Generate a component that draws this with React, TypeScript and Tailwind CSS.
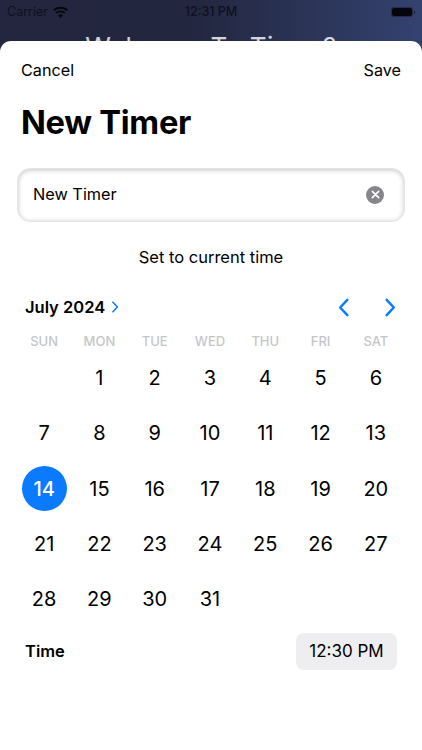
import React from "react";

const days: (number | null)[] = [null, ...Array.from({ length: 31 }, (_, i) => i + 1)];
const heads = ["SUN", "MON", "TUE", "WED", "THU", "FRI", "SAT"];

function Chevron({ dir, className }: { dir: "l" | "r"; className: string }) {
  return (
    <svg viewBox="0 0 12 20" className={className} fill="none" stroke="#0a7aff" strokeWidth="2.6" strokeLinecap="round" strokeLinejoin="round">
      <path d={dir === "r" ? "M2.5 2 L10 10 L2.5 18" : "M9.5 2 L2 10 L9.5 18"} />
    </svg>
  );
}

export default function App() {
  return (
    <div className="relative w-[422px] h-[750px] overflow-hidden bg-[linear-gradient(90deg,#23263e_0%,#22263f_45%,#34426f_100%)] font-['Inter','Liberation_Sans',sans-serif]">
      <div className="h-[23px] flex items-center justify-between pl-[7px] pr-[7px] pt-[1px]">
        <div className="flex items-center gap-[5px] w-[100px]">
          <span className="text-[12.5px] text-[#0e1020]">Carrier</span>
          <svg viewBox="0 0 18 13" className="w-[15px] h-[11px]" fill="#05060c">
            <path d="M9 13 L6.3 9.9 A4 4 0 0 1 11.7 9.9 Z" />
            <path d="M4.6 8.1 L3.1 6.4 A8.6 8.6 0 0 1 14.9 6.4 L13.4 8.1 A6.4 6.4 0 0 0 4.6 8.1 Z" />
            <path d="M1.6 4.8 L0 3.1 A13 13 0 0 1 18 3.1 L16.4 4.8 A10.8 10.8 0 0 0 1.6 4.8 Z" />
          </svg>
        </div>
        <span className="text-[12.5px] font-medium text-[#0e1020]">12:31 PM</span>
        <div className="w-[100px] flex justify-end items-center gap-[1px]">
          <div className="w-[22px] h-[10px] rounded-[3px] bg-[#05060c] border border-[#262b4a]" />
          <div className="w-[1px] h-[3px] bg-[#171a30]" />
        </div>
      </div>
      <div className="absolute top-[29px] left-0 right-0 text-center text-[26px] leading-[36px] text-white/80 font-normal tracking-[0.5px]">Welcome To Timer?</div>

      <div className="absolute top-[41px] left-0 right-0 bottom-0 bg-white rounded-t-[11px] px-[21px]">
        <div className="flex justify-between items-center h-[18px] mt-[20px] text-[16.2px] text-black">
          <span>Cancel</span>
          <span>Save</span>
        </div>
        <h1 className="mt-[23px] text-[32.7px] leading-[40px] font-bold text-black tracking-[-0.3px]">New Timer</h1>

        <div className="mt-[25.5px] -mx-[4px] h-[54px] rounded-[13px] border border-[#e4e4e6] bg-white shadow-[inset_0_1px_5px_rgba(0,0,0,0.24)] flex items-center justify-between pl-[15px] pr-[20px]">
          <span className="text-[16.3px] text-black">New Timer</span>
          <div className="w-[18px] h-[18px] rounded-full bg-[#85858b] flex items-center justify-center">
            <svg viewBox="0 0 10 10" className="w-[9px] h-[9px]" stroke="#fff" strokeWidth="1.9" strokeLinecap="round">
              <path d="M1.5 1.5 L8.5 8.5 M8.5 1.5 L1.5 8.5" />
            </svg>
          </div>
        </div>

        <div className="mt-[25.5px] text-center text-[16.5px] leading-[20px] text-black">Set to current time</div>

        <div className="mt-[30px] flex items-center justify-between pl-[4px] pr-[5px] h-[20px]">
          <div className="flex items-center gap-[6px]">
            <span className="text-[16.5px] font-semibold text-black">July 2024</span>
            <Chevron dir="r" className="w-[8px] h-[12px]" />
          </div>
          <div className="flex items-center gap-[34px]">
            <Chevron dir="l" className="w-[12px] h-[19px]" />
            <Chevron dir="r" className="w-[12px] h-[19px]" />
          </div>
        </div>

        <div className="-mx-[4.5px] mt-[15px] grid grid-cols-7 w-[387px]">
          {heads.map((h) => (
            <div key={h} className="text-center text-[13px] leading-[18px] font-medium text-[#c6c6c8]">{h}</div>
          ))}
        </div>
        <div className="-mx-[4.5px] mt-[0.5px] grid grid-cols-7 w-[387px] auto-rows-[55.3px]">
          {days.map((d, i) => (
            <div key={i} className="flex items-center justify-center">
              {d === 14 ? (
                <div className="w-[45px] h-[45px] rounded-full bg-[#0a7aff] flex items-center justify-center text-[20px] font-medium text-white">14</div>
              ) : (
                <span className="text-[20px] text-black">{d}</span>
              )}
            </div>
          ))}
        </div>

        <div className="mt-[6px] flex items-center justify-between pl-[4px] pr-[4px]">
          <span className="text-[16.5px] font-semibold text-black">Time</span>
          <div className="w-[101px] h-[37px] rounded-[8px] bg-[#eeeef0] flex items-center justify-center text-[17px] text-black">12:30 PM</div>
        </div>
      </div>
    </div>
  );
}
